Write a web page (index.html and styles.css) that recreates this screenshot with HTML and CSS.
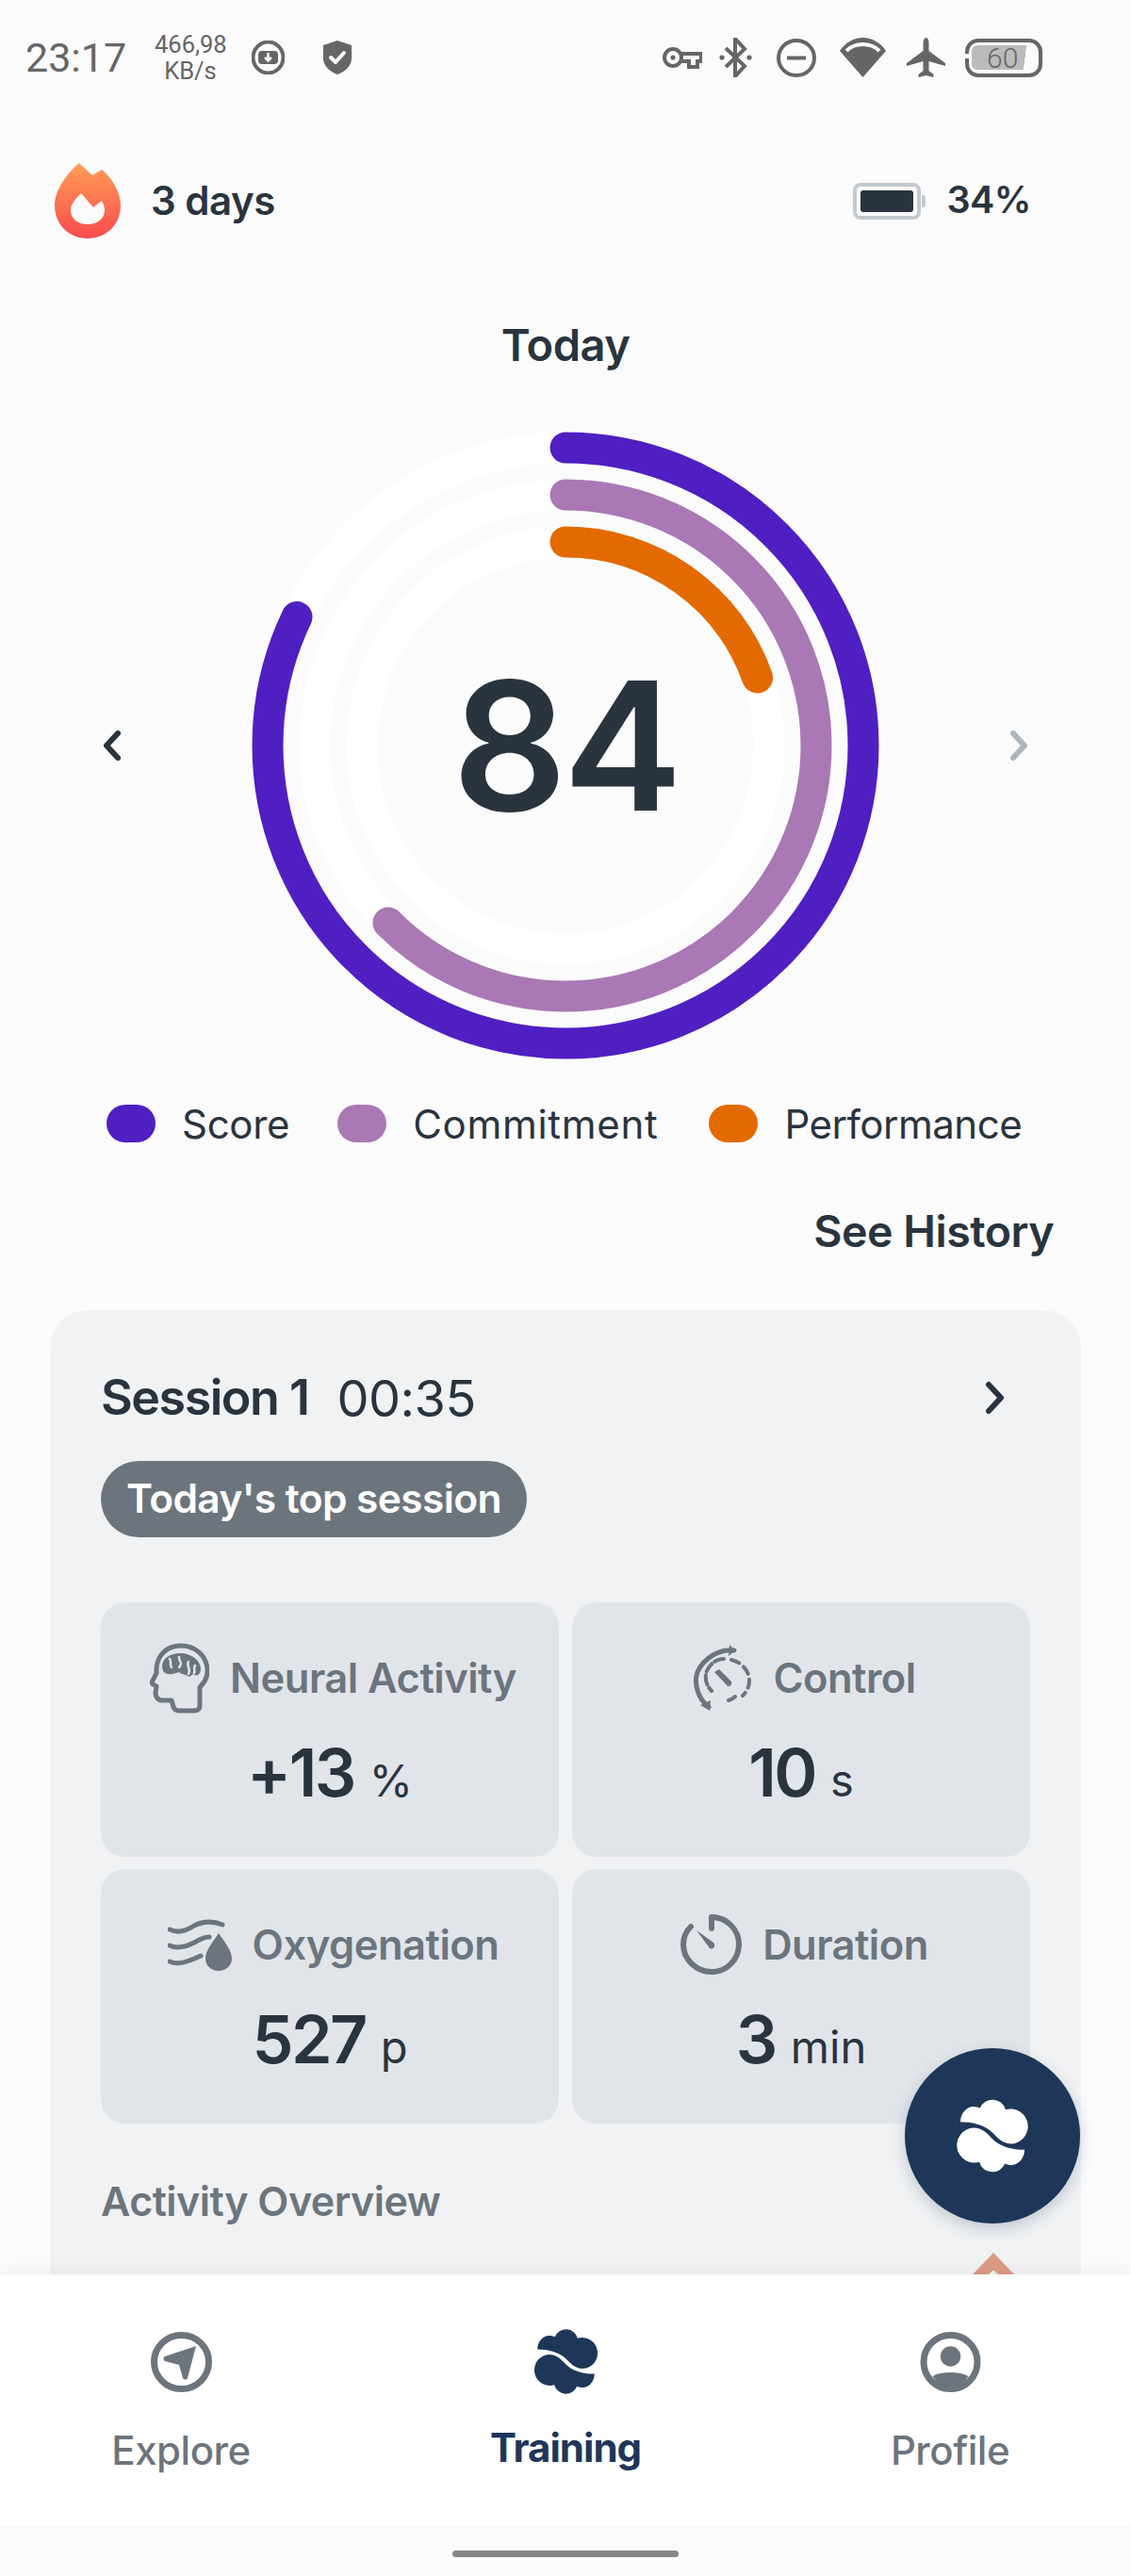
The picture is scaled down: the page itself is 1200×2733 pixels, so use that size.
FILE: index.html
```html
<!DOCTYPE html>
<html lang="en">
<head>
<meta charset="utf-8">
<title>Training</title>
<link rel="stylesheet" href="styles.css">
</head>
<body>
<svg class="defs" width="0" height="0" aria-hidden="true">
  <symbol id="logo" viewBox="-3 -3 106 106">
    <path d="M6 31C6 20 14 10 24 10C28 10 31 11 33 12A18.500 18.500 0 0 1 68 14A24 24 0 1 1 76 61C62 61 56 51 48 44C38 35 22 31 6 31Z"/>
    <path d="M94 69C94 80 86 90 76 90C72 90 69 89 67 88A18.500 18.500 0 0 1 32 86A24 24 0 1 1 24 39C38 39 44 49 52 56C62 65 78 69 94 69Z"/>
  </symbol>
</svg>
<div class="app">
  <header class="status">
    <span class="clock">23:17</span>
    <span class="speed">466,98<br>KB/s</span>
    <svg class="st-dl" viewBox="0 0 35 36"><ellipse cx="17.5" cy="18" rx="16" ry="16.5" class="s-line"/><rect x="7" y="11" width="21" height="14" rx="4" class="s-fill"/><path d="M17.5 13v8M14 18l3.5 3.5L21 18" class="s-knock"/></svg>
    <svg class="st-shield" viewBox="0 0 30 36"><path d="M15 0L30 5V19C30 27 23 33 15 36C7 33 0 27 0 19V5Z" class="s-fill"/><path d="M8 18l5 5 9-10" class="s-check"/></svg>
    <span class="status-gap"></span>
    <svg class="st-key" viewBox="0 0 42 24"><circle cx="11" cy="12" r="9" class="s-line"/><circle cx="11" cy="12" r="2.6" class="s-fill"/><path d="M19 8H41V16H37V22H28V16H19" class="s-line"/></svg>
    <svg class="st-bt" viewBox="0 0 35 42"><path d="M7 11L27 30L17 41V1L27 12L7 31" class="s-line"/><circle cx="3" cy="21" r="2.6" class="s-fill"/><circle cx="32" cy="21" r="2.6" class="s-fill"/></svg>
    <svg class="st-dnd" viewBox="0 0 42 41"><ellipse cx="21" cy="20.5" rx="19" ry="18.5" class="s-line"/><path d="M11 20.5H31" class="s-line"/></svg>
    <svg class="st-wifi" viewBox="0 0 49 42"><path d="M0 14C6 5 15 0 24.500 0C34 0 43 5 49 14L24.500 42Z" class="s-fill"/><path d="M7 14C12 9 18 7 24.500 7C31 7 37 9 42 14" class="s-arc"/></svg>
    <svg class="st-plane" viewBox="0 0 41 42"><path d="M20.500 0C22.500 0 23.500 3 23.500 6V14L41 27V30L23.500 25V35L28.500 39V42L20.500 40L12.500 42V39L17.500 35V25L0 30V27L17.500 14V6C17.500 3 18.500 0 20.500 0Z" class="s-fill"/></svg>
    <span class="st-batt"><span class="st-batt-fill">60</span></span>
  </header>

  <main class="content">
    <section class="summary">
      <div class="streak">
        <svg class="flame" viewBox="0 0 70 80">
          <defs><linearGradient id="fl" x1="0" y1="0" x2="0" y2="1"><stop offset="0" stop-color="#ff9d55"/><stop offset="1" stop-color="#f94c4f"/></linearGradient></defs>
          <path d="M26 0L40 13L50 7C60 15 70 30 70 45C70 66 54 80 35 80C16 80 0 66 0 45C0 28 14 10 26 0Z" fill="url(#fl)"/>
          <path d="M28 32L41 47L50 40C52 44 53 47 53 50C53 59 45 65 35 65C25 65 17 59 17 50C17 44 22 38 28 32Z" fill="#fbfbfc"/>
        </svg>
        <span>3 days</span>
      </div>
      <div class="charge">
        <span class="charge-icon"><span class="charge-level"></span></span>
        <span>34%</span>
      </div>
    </section>

    <h1 class="today">Today</h1>

    <section class="gauge-row">
      <svg class="chev chev-dark" viewBox="0 0 24 36"><path d="M18 5L6 18L18 31"/></svg>
      <div class="gauge">
        <svg class="rings" viewBox="0 0 666 666">
          <circle class="track" cx="333" cy="333" r="316"/>
          <circle class="track" cx="333" cy="333" r="266"/>
          <circle class="track" cx="333" cy="333" r="216"/>
          <circle class="ring ring-score" cx="333" cy="333" r="316" pathLength="360" stroke-dasharray="295.6 400" transform="rotate(-90 333 333)"/>
          <circle class="ring ring-commit" cx="333" cy="333" r="266" pathLength="360" stroke-dasharray="225 400" transform="rotate(-90 333 333)"/>
          <circle class="ring ring-perf" cx="333" cy="333" r="216" pathLength="360" stroke-dasharray="70.500 400" transform="rotate(-90 333 333)"/>
        </svg>
        <span class="score">84</span>
      </div>
      <svg class="chev chev-muted" viewBox="0 0 24 36"><path d="M6 5L18 18L6 31"/></svg>
    </section>

    <ul class="legend">
      <li class="legend-item"><i class="dot dot-score"></i><span>Score</span></li>
      <li class="legend-item legend-commit"><i class="dot dot-commit"></i><span>Commitment</span></li>
      <li class="legend-item legend-perf"><i class="dot dot-perf"></i><span>Performance</span></li>
    </ul>

    <a class="history">See History</a>

    <section class="card">
      <div class="card-head">
        <h2 class="session">Session 1</h2>
        <span class="session-time">00:35</span>
        <svg class="chev chev-card" viewBox="0 0 24 36"><path d="M6 4L19 18L6 32"/></svg>
      </div>
      <div class="pill">Today's top session</div>
      <div class="tiles">
        <article class="tile">
          <div class="tile-head">
            <svg class="ic ic-brain" viewBox="0 0 63 75">
              <path class="ic-line" d="M53 47C59 41 62 35 61 27C59 12 47 3 33 3C18 3 8 13 7 27V32L2 42C2 44 5 45 7 46L6 53C6 58 9 61 14 61H23L25 68C26 71 28 72 31 72H47C51 72 53 70 53 66Z"/>
              <path class="ic-fill" d="M13 25C13 16 22 11 32 11C44 11 55 19 54 29C53 34 50 36 46 33L42 36C38 33 34 34 31 31L24 33C17 34 13 31 13 25Z"/>
              <path class="ic-cut" d="M21 17C24 20 20 23 23 26M31 15C30 20 36 20 31 26M41 20C38 24 44 26 41 33M48 24C46 27 48 29 47 32"/>
            </svg>
            <span>Neural Activity</span>
          </div>
          <div class="tile-value"><strong>+13</strong><span>%</span></div>
        </article>
        <article class="tile">
          <div class="tile-head">
            <svg class="ic ic-control" viewBox="0 0 63 70">
              <path class="ic-line" d="M44 6C30 4 12 13 5 29C1 40 5 57 17 66"/>
              <path class="ic-fill" d="M39 0L45 6L38 12ZM8 64L19 59L18 70Z"/>
              <path class="ic-thin" d="M33 15C24 15 16 22 14 31C13 37 15 44 20 49"/>
              <path class="ic-dash" d="M41 16C51 18 60 27 60 38C60 45 57 50 53 54"/>
              <path class="ic-dash" d="M45 55C43 57 41 58 38 59"/>
              <path class="ic-fill" d="M23 29L28 26L41 39C42 42 40 45 37 44Z"/>
            </svg>
            <span>Control</span>
          </div>
          <div class="tile-value"><strong>10</strong><span>s</span></div>
        </article>
        <article class="tile">
          <div class="tile-head">
            <svg class="ic ic-oxy" viewBox="0 0 68 55">
              <path class="ic-line" d="M2 11C10 15 19 13 28 7C38 2 48 2 58 6"/>
              <path class="ic-line" d="M2 28C10 32 20 29 28 25C33 22 40 19 44 19"/>
              <path class="ic-line" d="M2 45C10 49 20 46 35 39"/>
              <path class="ic-fill" d="M54 15C60 24 68 33 68 42C68 50 61 55 54 55C47 55 40 50 40 42C40 33 48 24 54 15Z"/>
            </svg>
            <span>Oxygenation</span>
          </div>
          <div class="tile-value"><strong>527</strong><span>p</span></div>
        </article>
        <article class="tile">
          <div class="tile-head">
            <svg class="ic ic-dur" viewBox="0 0 65 64">
              <path class="ic-line ic-wide" d="M33 3C49 3 62 16 62 32C62 48 49 61 33 61C17 61 3 48 3 32C3 24 6 18 11 13"/>
              <path class="ic-line ic-wide" d="M33 3V15"/>
              <path class="ic-fill" d="M17 17L35 30C38 33 35 38 31 36Z"/>
            </svg>
            <span>Duration</span>
          </div>
          <div class="tile-value"><strong>3</strong><span>min</span></div>
        </article>
      </div>
      <h3 class="overview">Activity Overview</h3>
      <div class="chart-peek"><i class="peak"></i></div>
    </section>
  </main>

  <button class="fab" type="button" aria-label="Train"><svg class="fab-logo"><use href="#logo"/></svg></button>

  <nav class="tabs">
    <a class="tab">
      <svg class="tab-icon tab-compass" viewBox="0 0 65 64"><ellipse cx="32.500" cy="32" rx="29" ry="28.500" class="tab-ring"/><path d="M48 15L39 49C38 51 35 51 34 49L30 35L15 31C13 30 13 27 15 26Z" class="tab-solid"/></svg>
      <span>Explore</span>
    </a>
    <a class="tab tab-active">
      <svg class="tab-logo"><use href="#logo"/></svg>
      <span>Training</span>
    </a>
    <a class="tab">
      <svg class="tab-icon tab-profile" viewBox="0 0 64 64"><circle cx="32" cy="32" r="28.500" class="tab-ring"/><circle cx="32" cy="26" r="10.700" class="tab-solid"/><path d="M13 47C18 44 25 43 32 43C39 43 46 44 51 47C46 55 40 59 32 59C24 59 18 55 13 47Z" class="tab-solid"/></svg>
      <span>Profile</span>
    </a>
  </nav>
  <footer class="home"><span class="home-bar"></span></footer>
</div>
</body>
</html>
```

FILE: styles.css
```css
* { box-sizing: border-box; }
html, body { margin: 0; padding: 0; }
body { background: #fbfbfc; font-family: "Inter", "Liberation Sans", sans-serif; color: #29343f; }
.defs { display: block; height: 0; }
.app { position: relative; display: flex; flex-direction: column; width: 1200px; height: 2733px; overflow: hidden; }

/* status bar */
.status { display: flex; align-items: center; flex: 0 0 122px; height: 122px; padding: 0 94px 0 27px; color: #666; font-family: "Roboto", sans-serif; }
.clock { font-size: 43px; line-height: 1; width: 137px; }
.speed { width: 76px; font-size: 25.500px; line-height: 28px; text-align: center; }
.status svg { flex: none; }
.s-line { fill: none; stroke: #666; stroke-width: 4; }
.s-fill { fill: #666; }
.s-knock { fill: none; stroke: #fbfbfc; stroke-width: 2.5; }
.s-check { fill: none; stroke: #fbfbfc; stroke-width: 4; stroke-linecap: round; stroke-linejoin: round; }
.s-arc { fill: none; stroke: #fbfbfc; stroke-width: 4; }
.st-dl { width: 35px; height: 36px; margin-left: 27px; }
.st-shield { width: 30px; height: 36px; margin-left: 41px; }
.status-gap { flex: 1; }
.st-key { width: 42px; height: 24px; }
.st-bt { width: 35px; height: 42px; margin-left: 18px; }
.st-dnd { width: 42px; height: 41px; margin-left: 26px; }
.st-wifi { width: 49px; height: 42px; margin-left: 25px; }
.st-plane { width: 41px; height: 42px; margin-left: 22px; }
.st-batt { position: relative; display: flex; align-items: center; width: 82px; height: 41px; margin-left: 21px; padding: 4px 0 4px 3px; border: 4px solid #666; border-radius: 14px; }
.st-batt::before { content: ""; position: absolute; left: -5px; top: 12px; width: 6px; height: 5px; background: #fbfbfc; }
.st-batt-fill { display: block; width: 60px; height: 26px; padding-left: 16px; font-size: 30px; font-weight: 300; line-height: 27px; background: linear-gradient(97deg, #bbb 92%, transparent 92%); border-radius: 6px 0 0 6px; }

/* content */
.content { display: flex; flex-direction: column; flex: 1; min-height: 0; overflow: hidden; }
.summary { display: flex; align-items: center; justify-content: space-between; height: 80px; margin-top: 51px; padding: 0 106px 0 58px; font-size: 42px; font-weight: 600; line-height: 1; letter-spacing: -0.5px; }
.streak, .charge { display: flex; align-items: center; }
.charge { font-size: 39.500px; }
.flame { width: 70px; height: 80px; margin-right: 32px; }
.charge-icon { position: relative; display: block; width: 72px; height: 39px; margin-right: 27px; padding: 4px; border: 4px solid #c3c9cf; border-radius: 8px; }
.charge-icon::after { content: ""; position: absolute; right: -9px; top: 9px; width: 4px; height: 13px; background: #c3c9cf; border-radius: 0 3px 3px 0; }
.charge-level { display: block; height: 100%; background: #29343f; border-radius: 3px; }
.today { height: 60px; margin: 83px 0 0; font-size: 47px; font-weight: 600; line-height: 60px; text-align: center; letter-spacing: -0.5px; }
.gauge-row { display: flex; align-items: center; justify-content: space-between; margin-top: 62px; padding: 0 107px; }
.gauge { position: relative; display: flex; align-items: center; justify-content: center; width: 666px; height: 666px; }
.rings { position: absolute; inset: 0; width: 666px; height: 666px; }
.track { fill: none; stroke: #fff; stroke-width: 33; }
.ring { fill: none; stroke-width: 33; stroke-linecap: round; }
.ring-score { stroke: #4f1fc2; }
.ring-commit { stroke: #aa78b5; }
.ring-perf { stroke: #e36a00; }
.score { position: relative; font-size: 190px; font-weight: 600; line-height: 1; letter-spacing: -4px; }
.chev { flex: none; width: 24px; height: 36px; }
.chev path { fill: none; stroke-width: 6; stroke-linecap: round; stroke-linejoin: round; }
.chev-dark path { stroke: #29343f; }
.chev-muted path { stroke: #adb5bd; }
.chev-card { margin-left: auto; margin-right: 26px; }
.chev-card path { stroke: #29343f; }

.legend { display: flex; align-items: center; height: 40px; margin: 48px 0 0; padding: 0 0 0 113px; list-style: none; font-size: 42px; font-weight: 400; }
.legend-item { display: flex; align-items: center; margin-right: 51px; }
.legend-item span { letter-spacing: -0.3px; }
.legend-commit { margin-right: 54px; }
.legend-commit span { letter-spacing: 0.7px; }
.legend-perf span { letter-spacing: -0.5px; }
.dot { display: block; width: 52px; height: 40px; margin-right: 28px; border-radius: 20px; }
.dot-score { background: #4f1fc2; }
.dot-commit { background: #aa78b5; }
.dot-perf { background: #e36a00; }
.history { display: block; height: 50px; margin-top: 69px; padding-right: 82px; font-size: 46.500px; font-weight: 600; line-height: 50px; text-align: right; letter-spacing: -0.5px; }

/* card */
.card { display: flex; flex-direction: column; flex: 1; min-height: 0; margin: 59px 53px 0; padding: 63px 54px 0; overflow: hidden; background: #f0f2f4; border-radius: 40px 40px 0 0; }
.card-head { display: flex; align-items: center; flex: none; height: 60px; }
.session { margin: 0 30px 0 0; font-size: 52px; font-weight: 600; line-height: 60px; letter-spacing: -1.5px; }
.session-time { font-size: 54px; font-weight: 400; letter-spacing: -0.5px; }
.pill { flex: none; align-self: flex-start; height: 81px; margin-top: 37px; padding: 0 27px; color: #fff; font-size: 42.500px; font-weight: 600; line-height: 79px; letter-spacing: -0.6px; background: #6c757d; border-radius: 41px; }
.tiles { display: grid; flex: none; grid-template-columns: 486px 486px; grid-auto-rows: 270px; column-gap: 14px; row-gap: 13px; margin-top: 69px; }
.tile { padding-top: 42px; background: #e1e5ea; border-radius: 26px; }
.tile-head { display: flex; align-items: center; justify-content: center; height: 76px; padding-left: 7px; color: #6c757d; font-size: 43.500px; font-weight: 600; letter-spacing: -0.5px; }
.ic { flex: none; margin-right: 22px; }
.ic-brain { width: 63px; height: 75px; }
.ic-control { width: 63px; height: 70px; }
.ic-oxy { width: 68px; height: 55px; }
.ic-dur { width: 65px; height: 64px; }
.ic-line { fill: none; stroke: #6c757d; stroke-width: 5; stroke-linecap: round; stroke-linejoin: round; }
.ic-wide { stroke-width: 6; }
.ic-thin { fill: none; stroke: #6c757d; stroke-width: 4; stroke-linecap: round; stroke-dasharray: 10 4; }
.ic-dash { fill: none; stroke: #6c757d; stroke-width: 4; stroke-linecap: round; stroke-dasharray: 9 6; }
.ic-fill { fill: #6c757d; }
.ic-cut { fill: none; stroke: #e1e5ea; stroke-width: 2.5; stroke-linecap: round; }
.tile-value { display: flex; align-items: baseline; justify-content: center; height: 80px; margin-top: 23px; line-height: 80px; }
.tile-value strong { font-size: 70px; font-weight: 600; letter-spacing: -2.5px; }
.tile-value span { margin-left: 16px; font-size: 47px; font-weight: 400; }
.overview { flex: none; height: 50px; margin: 57px 0 0; color: #6c757d; font-size: 43px; font-weight: 600; line-height: 50px; letter-spacing: -0.5px; }
.chart-peek { display: flex; flex: none; justify-content: flex-end; height: 23px; margin-top: 30px; padding-right: 17px; }
.peak { display: block; width: 44px; height: 23px; background: #dc9a83; clip-path: polygon(50% 0, 100% 100%, 62% 100%, 50% 80%, 38% 100%, 0 100%); }

/* floating button */
.fab { position: absolute; left: 960px; top: 2173px; display: flex; align-items: center; justify-content: center; width: 186px; height: 186px; padding: 0; color: #fff; background: #1e3759; border: 0; border-radius: 50%; box-shadow: 0 6px 16px rgba(30, 55, 89, 0.22); }
.fab-logo { width: 82px; height: 86px; fill: #fff; }

/* tabs */
.tabs { position: relative; display: flex; flex: 0 0 267px; justify-content: space-between; background: #fff; box-shadow: 0 -6px 14px rgba(0, 0, 0, 0.035); }
.tab { display: flex; flex-direction: column; align-items: center; width: 384px; padding-top: 61px; color: #6c757d; font-size: 42px; font-weight: 500; letter-spacing: -0.5px; }
.tab span { margin-top: 32px; line-height: 60px; }
.tab-icon { width: 65px; height: 64px; }
.tab-ring { fill: none; stroke: #6c757d; stroke-width: 7; }
.tab-solid { fill: #6c757d; }
.tab-active { padding-top: 54px; color: #1e3759; font-weight: 700; letter-spacing: -1px; }
.tab-active span { margin-top: 23px; }
.tab-logo { width: 73px; height: 77px; fill: #1e3759; }
.home { display: flex; flex: 0 0 53px; justify-content: center; padding-top: 26px; background: #fbfbfb; }
.home-bar { display: block; width: 240px; height: 7px; background: #888; border-radius: 4px; }
```
